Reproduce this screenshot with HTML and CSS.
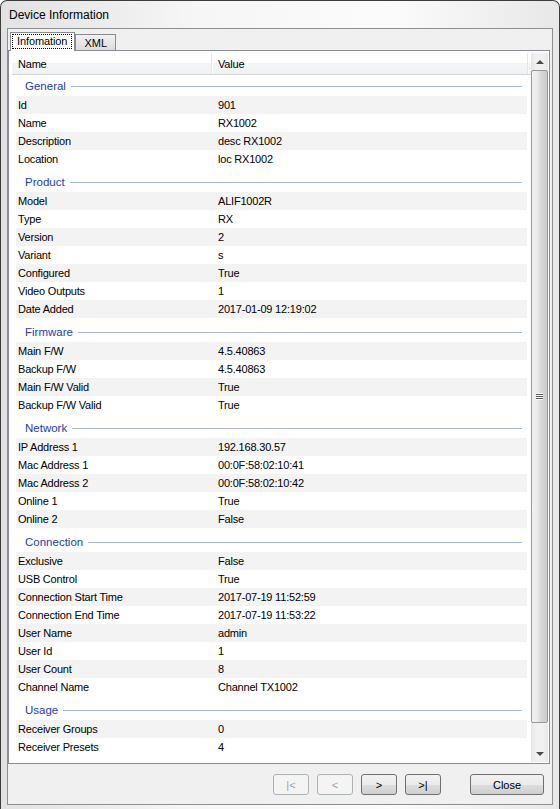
FILE: index.html
```
<html>
    <head>
        <title>Device Information</title>
        <link rel="stylesheet" href="styles.css">
    </head>
    <body>
        <div class="window">
            <div class="titlebar">Device Information</div>
            <div class="client">
                <div class="tabs">
                    <div class="tab active"><span class="focus">Infomation</span></div>
                    <div class="tab">XML</div>
                </div>
                <div class="panel">
                    <div class="listview">
                        <div class="lv-main">
                            <div class="lv-header">
                                <div class="col col-name">Name</div>
                                <div class="col col-value">Value</div>
                                <div class="col-rest"></div>
                            </div>
                            <div class="lv-body">
                                <div class="group first">
                                    <div class="group-title"><span>General</span><div class="rule"></div></div>
                                    <div class="row alt"><div class="name">Id</div><div class="value">901</div></div>
                                    <div class="row"><div class="name">Name</div><div class="value">RX1002</div></div>
                                    <div class="row alt"><div class="name">Description</div><div class="value">desc RX1002</div></div>
                                    <div class="row"><div class="name">Location</div><div class="value">loc RX1002</div></div>
                                </div>
                                <div class="group">
                                    <div class="group-title"><span>Product</span><div class="rule"></div></div>
                                    <div class="row alt"><div class="name">Model</div><div class="value">ALIF1002R</div></div>
                                    <div class="row"><div class="name">Type</div><div class="value">RX</div></div>
                                    <div class="row alt"><div class="name">Version</div><div class="value">2</div></div>
                                    <div class="row"><div class="name">Variant</div><div class="value">s</div></div>
                                    <div class="row alt"><div class="name">Configured</div><div class="value">True</div></div>
                                    <div class="row"><div class="name">Video Outputs</div><div class="value">1</div></div>
                                    <div class="row alt"><div class="name">Date Added</div><div class="value">2017-01-09 12:19:02</div></div>
                                </div>
                                <div class="group">
                                    <div class="group-title"><span>Firmware</span><div class="rule"></div></div>
                                    <div class="row alt"><div class="name">Main F/W</div><div class="value">4.5.40863</div></div>
                                    <div class="row"><div class="name">Backup F/W</div><div class="value">4.5.40863</div></div>
                                    <div class="row alt"><div class="name">Main F/W Valid</div><div class="value">True</div></div>
                                    <div class="row"><div class="name">Backup F/W Valid</div><div class="value">True</div></div>
                                </div>
                                <div class="group">
                                    <div class="group-title"><span>Network</span><div class="rule"></div></div>
                                    <div class="row alt"><div class="name">IP Address 1</div><div class="value">192.168.30.57</div></div>
                                    <div class="row"><div class="name">Mac Address 1</div><div class="value">00:0F:58:02:10:41</div></div>
                                    <div class="row alt"><div class="name">Mac Address 2</div><div class="value">00:0F:58:02:10:42</div></div>
                                    <div class="row"><div class="name">Online 1</div><div class="value">True</div></div>
                                    <div class="row alt"><div class="name">Online 2</div><div class="value">False</div></div>
                                </div>
                                <div class="group">
                                    <div class="group-title"><span>Connection</span><div class="rule"></div></div>
                                    <div class="row alt"><div class="name">Exclusive</div><div class="value">False</div></div>
                                    <div class="row"><div class="name">USB Control</div><div class="value">True</div></div>
                                    <div class="row alt"><div class="name">Connection Start Time</div><div class="value">2017-07-19 11:52:59</div></div>
                                    <div class="row"><div class="name">Connection End Time</div><div class="value">2017-07-19 11:53:22</div></div>
                                    <div class="row alt"><div class="name">User Name</div><div class="value">admin</div></div>
                                    <div class="row"><div class="name">User Id</div><div class="value">1</div></div>
                                    <div class="row alt"><div class="name">User Count</div><div class="value">8</div></div>
                                    <div class="row"><div class="name">Channel Name</div><div class="value">Channel TX1002</div></div>
                                </div>
                                <div class="group">
                                    <div class="group-title"><span>Usage</span><div class="rule"></div></div>
                                    <div class="row alt"><div class="name">Receiver Groups</div><div class="value">0</div></div>
                                    <div class="row"><div class="name">Receiver Presets</div><div class="value">4</div></div>
                                </div>
                            </div>
                        </div>
                        <div class="scrollbar">
                            <div class="sb-arrow"><div class="tri-up"></div></div>
                            <div class="sb-track">
                                <div class="sb-thumb">
                                    <div class="grip"></div>
                                </div>
                            </div>
                            <div class="sb-arrow"><div class="tri-down"></div></div>
                        </div>
                    </div>
                </div>
                <div class="buttons">
                    <div class="nav">
                        <button class="btn" disabled>|&lt;</button>
                        <button class="btn" disabled>&lt;</button>
                        <button class="btn">&gt;</button>
                        <button class="btn">&gt;|</button>
                    </div>
                    <button class="btn close">Close</button>
                </div>
            </div>
        </div>
    </body>
</html>
```

FILE: styles.css
```
body{
    margin: 0;
    font-family: "Liberation Sans", Arial, sans-serif;
    font-size: 11px;
    color: #000;
    background: #fff;
}

.window{
    width: 560px;
    height: 809px;
    box-sizing: border-box;
    border: 1px solid #3c3c3c;
    border-bottom: none;
    border-radius: 7px 7px 0 0;
    background: linear-gradient(to right, #e2e2e2, #f6f6f6 35%, #fbfbfb 70%, #e8e8e8);
    display: flex;
    flex-direction: column;
}

.titlebar{
    height: 27px;
    line-height: 29px;
    padding-left: 8px;
    font-size: 12px;
    flex: none;
}

.client{
    margin: 0 6px 4px 6px;
    border: 1px solid #8f8f8f;
    background: #f0f0f0;
    flex: 1;
    display: flex;
    flex-direction: column;
}

/* tabs */
.tabs{
    height: 21px;
    display: flex;
    align-items: flex-end;
    padding-left: 2px;
    flex: none;
}
.tab{
    height: 15px;
    line-height: 16px;
    padding: 0 8px 0 8px;
    border: 1px solid #898c95;
    border-bottom: none;
    background: linear-gradient(#f2f2f2, #dcdcdc);
    font-size: 11px;
}
.tab.active{
    height: 18px;
    line-height: 16px;
    padding: 0 2px 0 1px;
    background: #fff;
    margin-bottom: -1px;
    position: relative;
    z-index: 1;
}
.tab .focus{
    display: inline-block;
    border: 1px dotted #000;
    padding: 0 4px 0 4px;
    line-height: 13px;
    margin-top: 1px;
    letter-spacing: -0.1px;
}

.panel{
    margin-right: 2px;
    height: 714px;
    box-sizing: border-box;
    border: 1px solid #898c95;
    background: #fff;
    padding: 2px 1px 1px 3px;
    flex: none;
    display: flex;
}

/* list view */
.listview{
    flex: 1;
    display: flex;
}
.lv-main{
    flex: 1;
    display: flex;
    flex-direction: column;
    overflow: hidden;
    letter-spacing: -0.2px;
}
.lv-header{
    height: 21px;
    border-bottom: 1px solid #d5d5d5;
    background: linear-gradient(#ffffff 0%, #ffffff 45%, #f3f4f6 50%, #f1f2f4 100%);
    display: flex;
    flex: none;
}
.col{
    line-height: 22px;
    padding-left: 6px;
    box-sizing: border-box;
    border-right: 1px solid #e3e5e8;
    box-shadow: 1px 0 0 #fff;
}
.col-name{
    width: 200px;
}
.col-value{
    width: 316px;
}
.col-rest{
    flex: 1;
}

.lv-body{
    flex: 1;
    padding-top: 1px;
}
.group{
    margin-top: 4px;
}
.group.first{
    margin-top: 0;
}
.group-title{
    height: 20px;
    display: flex;
    align-items: center;
    padding-left: 13px;
    width: 497px;
    color: #1e3ca8;
    font-size: 11.5px;
    letter-spacing: 0;
}
.group-title .rule{
    flex: 1;
    height: 1px;
    margin-left: 5px;
    background: #a8b6d3;
}
.row{
    height: 18px;
    line-height: 18px;
    margin-left: 4px;
    width: 511px;
    display: flex;
}
.row.alt{
    background: #f3f3f3;
}
.row .name{
    width: 196px;
    padding-left: 2px;
    box-sizing: border-box;
}
.row .value{
    padding-left: 6px;
}

/* scroll bar */
.scrollbar{
    width: 17px;
    display: flex;
    flex-direction: column;
    background: linear-gradient(to right, #e6e6e6, #f1f1f1 30%, #f1f1f1 70%, #e8e8e8);
    flex: none;
}
.sb-arrow{
    height: 17px;
    display: flex;
    align-items: center;
    justify-content: center;
    flex: none;
}
.tri-up{
    width: 0;
    height: 0;
    border-left: 4px solid transparent;
    border-right: 4px solid transparent;
    border-bottom: 4px solid #4a4a4a;
}
.tri-down{
    width: 0;
    height: 0;
    border-left: 4px solid transparent;
    border-right: 4px solid transparent;
    border-top: 4px solid #4a4a4a;
}
.sb-track{
    flex: 1;
    padding-bottom: 22px;
    display: flex;
}
.sb-thumb{
    flex: 1;
    border: 1px solid #979797;
    border-radius: 2px;
    background: linear-gradient(to right, #f2f2f2, #e8e8e8 40%, #d9d9d9 55%, #cdcdcd);
    display: flex;
    align-items: center;
    justify-content: center;
}
.grip{
    width: 7px;
    height: 7px;
    background: repeating-linear-gradient(#fdfdfd 0, #fdfdfd 1px, #555 1px, #555 2px);
}

/* buttons */
.buttons{
    display: flex;
    justify-content: flex-end;
    padding: 10px 8px 0 0;
}
.nav{
    display: flex;
    gap: 8px;
    margin-right: 29px;
}
.btn{
    width: 36px;
    height: 21px;
    padding: 0;
    border: 1px solid #707070;
    border-radius: 3px;
    background: linear-gradient(#f2f2f2 0%, #ebebeb 50%, #dddddd 51%, #cfcfcf 100%);
    font-family: "Liberation Sans", Arial, sans-serif;
    font-size: 11px;
    color: #000;
}
.btn:disabled{
    border-color: #adb2b5;
    background: #f4f4f4;
    color: #a3a3a3;
}
.btn.close{
    width: 74px;
}
```
